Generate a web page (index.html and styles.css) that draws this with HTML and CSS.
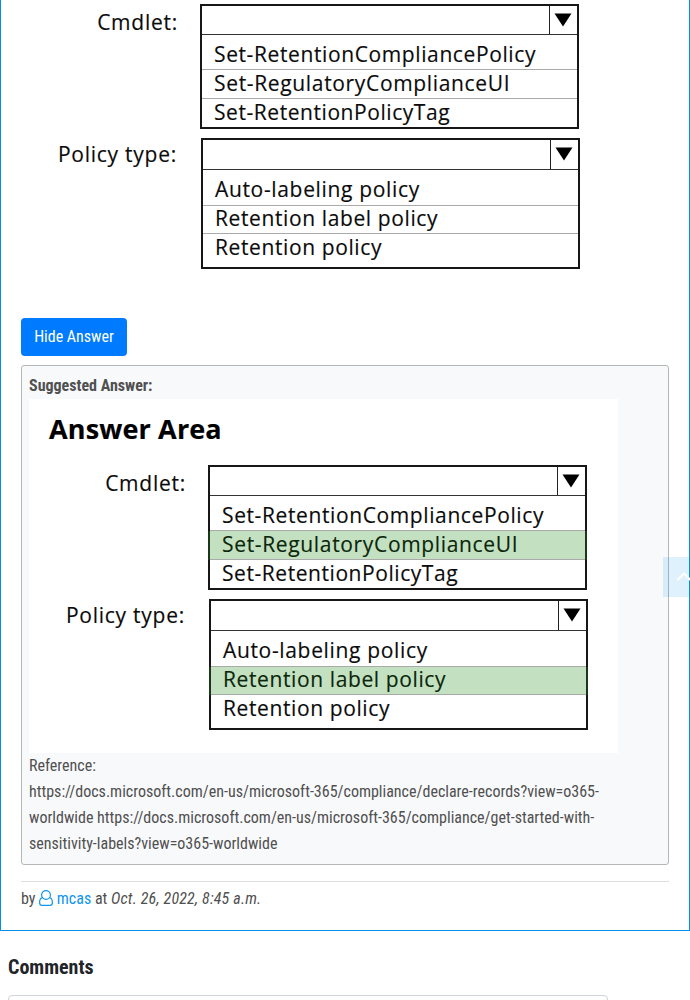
FILE: index.html
```html
<!DOCTYPE html>
<html lang="en">
<head>
<meta charset="utf-8">
<title>Question discussion</title>
<link rel="stylesheet" href="styles.css">
</head>
<body>
<main class="question-card">
  <div class="diagram diagram-question">
    <div class="field">
      <span class="field-label cmdlet">Cmdlet:</span>
      <div class="select">
        <div class="select-head"><span class="arrow"><svg width="18" height="14" viewBox="0 0 18 14"><path d="M0.5 0.5h17L9 13.5z"/></svg></span></div>
        <div class="option first"><span class="t1">Set-RetentionCompliancePolicy</span></div>
        <div class="option"><span class="t2">Set-RegulatoryComplianceUI</span></div>
        <div class="option"><span class="t3">Set-RetentionPolicyTag</span></div>
      </div>
    </div>
    <div class="field">
      <span class="field-label policy">Policy type:</span>
      <div class="select select-policy">
        <div class="select-head"><span class="arrow"><svg width="18" height="14" viewBox="0 0 18 14"><path d="M0.5 0.5h17L9 13.5z"/></svg></span></div>
        <div class="option first"><span class="t4">Auto-labeling policy</span></div>
        <div class="option second"><span class="t5">Retention label policy</span></div>
        <div class="option last"><span class="t6">Retention policy</span></div>
      </div>
    </div>
  </div>

  <button class="btn">Hide Answer</button>

  <section class="answer">
    <strong class="answer-title">Suggested Answer:</strong>
    <div class="diagram diagram-answer">
      <h2 class="diagram-title"><span>Answer Area</span></h2>
      <div class="field">
        <span class="field-label cmdlet">Cmdlet:</span>
        <div class="select">
          <div class="select-head"><span class="arrow"><svg width="18" height="14" viewBox="0 0 18 14"><path d="M0.5 0.5h17L9 13.5z"/></svg></span></div>
          <div class="option first"><span class="t1">Set-RetentionCompliancePolicy</span></div>
          <div class="option chosen"><span class="t2">Set-RegulatoryComplianceUI</span></div>
          <div class="option"><span class="t3">Set-RetentionPolicyTag</span></div>
        </div>
      </div>
      <div class="field">
        <span class="field-label policy">Policy type:</span>
        <div class="select select-policy">
          <div class="select-head"><span class="arrow"><svg width="18" height="14" viewBox="0 0 18 14"><path d="M0.5 0.5h17L9 13.5z"/></svg></span></div>
          <div class="option first"><span class="t4">Auto-labeling policy</span></div>
          <div class="option second chosen"><span class="t5">Retention label policy</span></div>
          <div class="option last"><span class="t6">Retention policy</span></div>
        </div>
      </div>
    </div>
    <p class="reference">Reference:<br>https://docs.microsoft.com/en-us/microsoft-365/compliance/declare-records?view=o365-<br>worldwide https://docs.microsoft.com/en-us/microsoft-365/compliance/get-started-with-<br>sensitivity-labels?view=o365-worldwide</p>
  </section>

  <footer class="byline">by <svg class="user" width="14" height="16" viewBox="0 0 14 16"><circle cx="7" cy="5" r="4.4"/><path d="M3.3 7.5C1.3 8.3.6 10.2.6 12.5c0 1.8.9 2.9 2.4 2.9h8c1.5 0 2.4-1.1 2.4-2.9 0-2.3-.7-4.2-2.7-5"/></svg> <a class="author">mcas</a> at <em>Oct. 26, 2022, 8:45 a.m.</em></footer>
</main>

<h3 class="comments-title">Comments</h3>
<div class="comment-box"></div>

<div class="to-top"><svg width="16" height="12" viewBox="0 0 16 12"><path d="M1.5 9L8 2.5 14.5 9"/></svg></div>
</body>
</html>
```

FILE: styles.css
```css
* { box-sizing: border-box; }
html, body { height: 1000px; overflow: hidden; }
body {
  margin: 0;
  background: #fff;
  color: #505050;
  font: 16px/26px "Roboto Condensed", Roboto, "Liberation Sans", sans-serif;
  font-stretch: 75%;
}
.question-card {
  height: 931px;
  padding: 0 20px;
  border: 1px solid #0090e9;
  border-top: 0;
}

/* Drop-down diagrams */
.diagram {
  width: 589px;
  background: #fff;
  color: #0b0b0b;
  font: 21px/26px "Open Sans", sans-serif;
  font-stretch: 100%;
  letter-spacing: .61px;
  -webkit-text-stroke: .15px currentColor;
}
.diagram-question { height: 318px; padding-top: 4px; }
.diagram-answer { height: 354px; }
.diagram-title {
  margin: 0;
  padding: 11px 0 0 20px;
  height: 66px;
  color: #000;
  font-size: 27px;
  line-height: 38px;
  letter-spacing: .14px;
}
.t2, .t4 { letter-spacing: .66px; }
.t3 { letter-spacing: .56px; }
.field { display: flex; margin-bottom: 9px; }
.field-label { width: 179px; flex: none; text-align: right; white-space: nowrap; padding: 5px 22px 0 0; letter-spacing: .75px; }
.field-label.policy { width: 180px; padding: 3px 24px 0 0; }
.select { width: 379px; border: 2px solid #171717; }
.select-head {
  display: flex;
  justify-content: flex-end;
  height: 29px;
  border-bottom: 1px solid #333;
}
.select-policy .select-head { height: 30px; }
.arrow {
  display: flex;
  justify-content: center;
  width: 28px;
  padding: 7px 1px 0 0;
  border-left: 1px solid #222;
}
.arrow svg { flex: none; fill: #000; }
.option { height: 29px; padding-left: 12px; border-bottom: 1px solid #aaa; white-space: nowrap; }
.option.first { height: 35px; padding-top: 6px; }
.select-policy .option.first { height: 36px; }
.option.second { height: 28px; line-height: 24px; }
.option:last-child { height: 28px; border-bottom: 0; }
.option.last:last-child { height: 33px; }
.option.chosen { background: #c3e1c1; color: #0b260b; box-shadow: -2px 0 #1c361c, 2px 0 #1c361c; }

.btn {
  display: block;
  height: 38px;
  width: 106px;
  padding: 0;
  border: 0;
  border-radius: 4px;
  background: #007bff;
  color: #fff;
  font: inherit;
}
.answer {
  height: 500px;
  margin-top: 9px;
  padding: 7px;
  border: 1px solid #b4b6b8;
  border-radius: 3px;
  background: #f8f9fb;
}
.answer-title { display: block; }
.reference { margin: 0; white-space: nowrap; }
.byline { margin-top: 16px; padding-top: 4px; border-top: 1px solid #dedfe0; }
.byline em { letter-spacing: .19px; }
.user { fill: none; stroke: #0f96ee; stroke-width: 1.2; vertical-align: -2px; }
.author { color: #0f96ee; }
.comments-title { margin: 22px 8px 0; color: #212529; font-size: 20px; line-height: 28px; }
.comment-box { width: 600px; height: 40px; margin: 14px 8px 0; border: 1px solid #ced4da; border-radius: 4px; }

/* Floating scroll button */
.to-top {
  position: absolute;
  top: 557px;
  right: 0;
  width: 27px;
  height: 40px;
  padding: 14px 0 0 13px;
  overflow: hidden;
  background: rgba(0, 144, 233, .13);
}
.to-top svg { display: block; fill: none; stroke: #fff; stroke-width: 2; }
```
